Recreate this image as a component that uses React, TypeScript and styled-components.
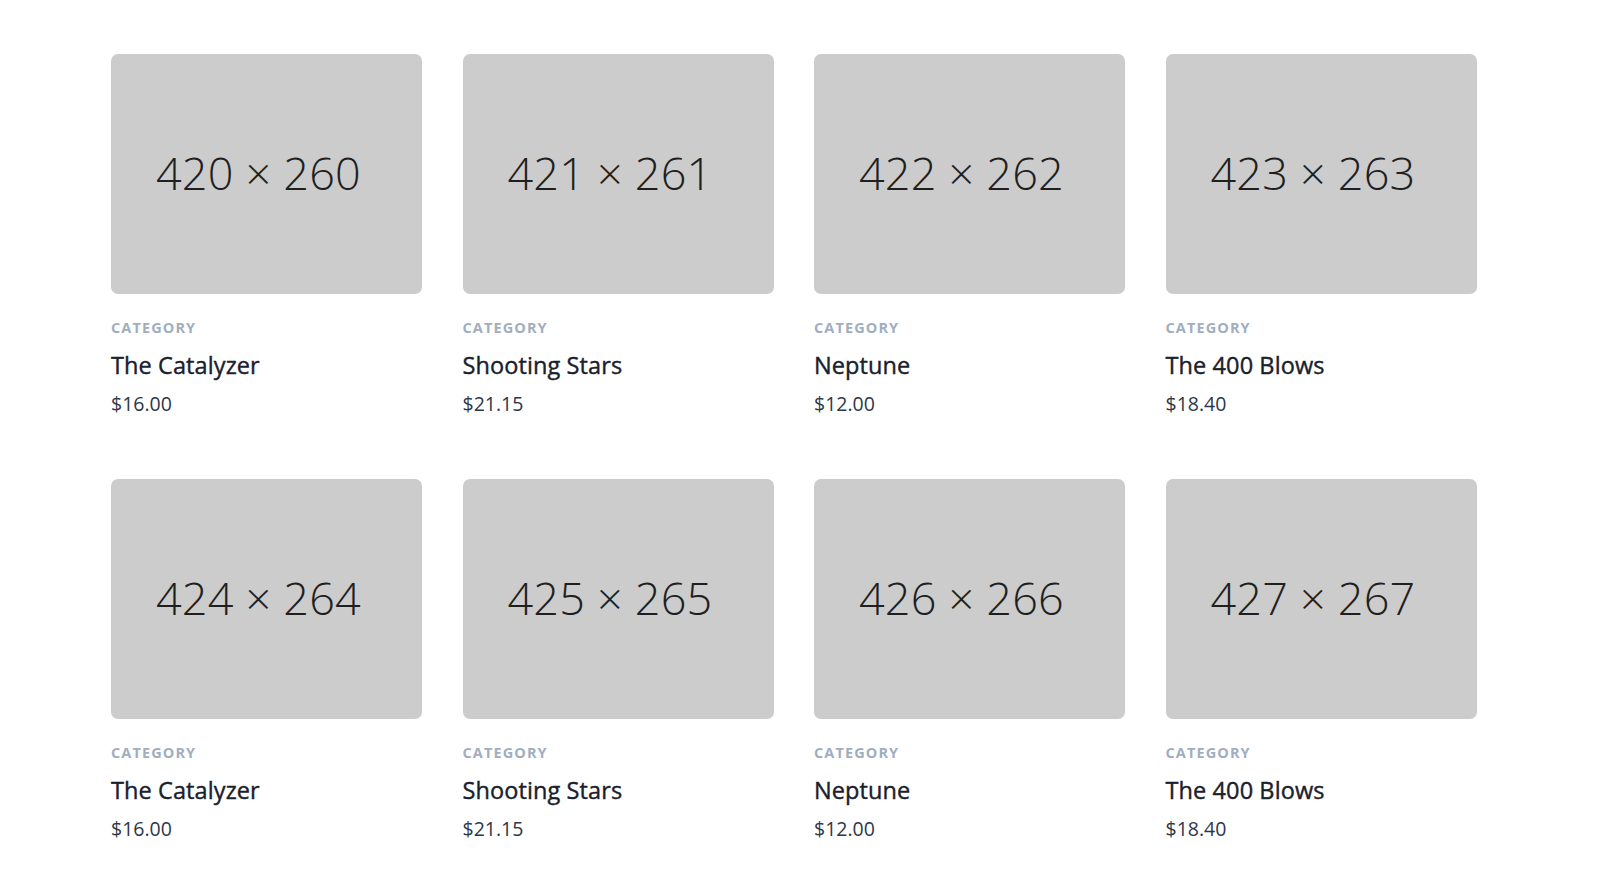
import React from "react";
import styled, { createGlobalStyle } from "styled-components";

const Global = createGlobalStyle`
  html, body { margin: 0; padding: 0; background: #ffffff; }
  body { font-family: "Open Sans", "Noto Sans", sans-serif; }
`;

const Page = styled.main`
  padding: 54px 0 40px 111px;
`;

const Grid = styled.div`
  display: grid;
  grid-template-columns: repeat(4, 311px);
  column-gap: 40.5px;
  row-gap: 61px;
`;

const Card = styled.article`
  display: flex;
  flex-direction: column;
`;

const Thumb = styled.div`
  height: 240px;
  box-sizing: border-box;
  border-radius: 7px;
  background: #cccccc;
  display: flex;
  align-items: center;
  justify-content: center;
  padding: 0 16px 3px 0;
  color: #1f1f1f;
  font-family: "Open Sans", "Noto Sans", sans-serif;
  font-weight: 300;
  font-size: 45px;
  letter-spacing: 0.2px;
`;

const Category = styled.div`
  margin-top: 24px;
  font-size: 14.5px;
  line-height: 20px;
  font-weight: 700;
  letter-spacing: 1.1px;
  color: #a0aec0;
`;

const Title = styled.h2`
  margin: 11px 0 0;
  font-size: 23.5px;
  line-height: 32px;
  font-weight: 400;
  -webkit-text-stroke: 0.4px #1a202c;
  letter-spacing: 0.1px;
  color: #1a202c;
`;

const Price = styled.p`
  margin: 9px 0 0;
  font-size: 19.5px;
  line-height: 28px;
  color: #2d3748;
`;

const items = [
  { w: 420, h: 260, title: "The Catalyzer", price: "$16.00" },
  { w: 421, h: 261, title: "Shooting Stars", price: "$21.15" },
  { w: 422, h: 262, title: "Neptune", price: "$12.00" },
  { w: 423, h: 263, title: "The 400 Blows", price: "$18.40" },
  { w: 424, h: 264, title: "The Catalyzer", price: "$16.00" },
  { w: 425, h: 265, title: "Shooting Stars", price: "$21.15" },
  { w: 426, h: 266, title: "Neptune", price: "$12.00" },
  { w: 427, h: 267, title: "The 400 Blows", price: "$18.40" },
];

export default function App() {
  return (
    <>
      <Global />
      <Page>
        <Grid>
          {items.map((it, i) => (
            <Card key={i}>
              <Thumb>
                {it.w} × {it.h}
              </Thumb>
              <Category>CATEGORY</Category>
              <Title>{it.title}</Title>
              <Price>{it.price}</Price>
            </Card>
          ))}
        </Grid>
      </Page>
    </>
  );
}
